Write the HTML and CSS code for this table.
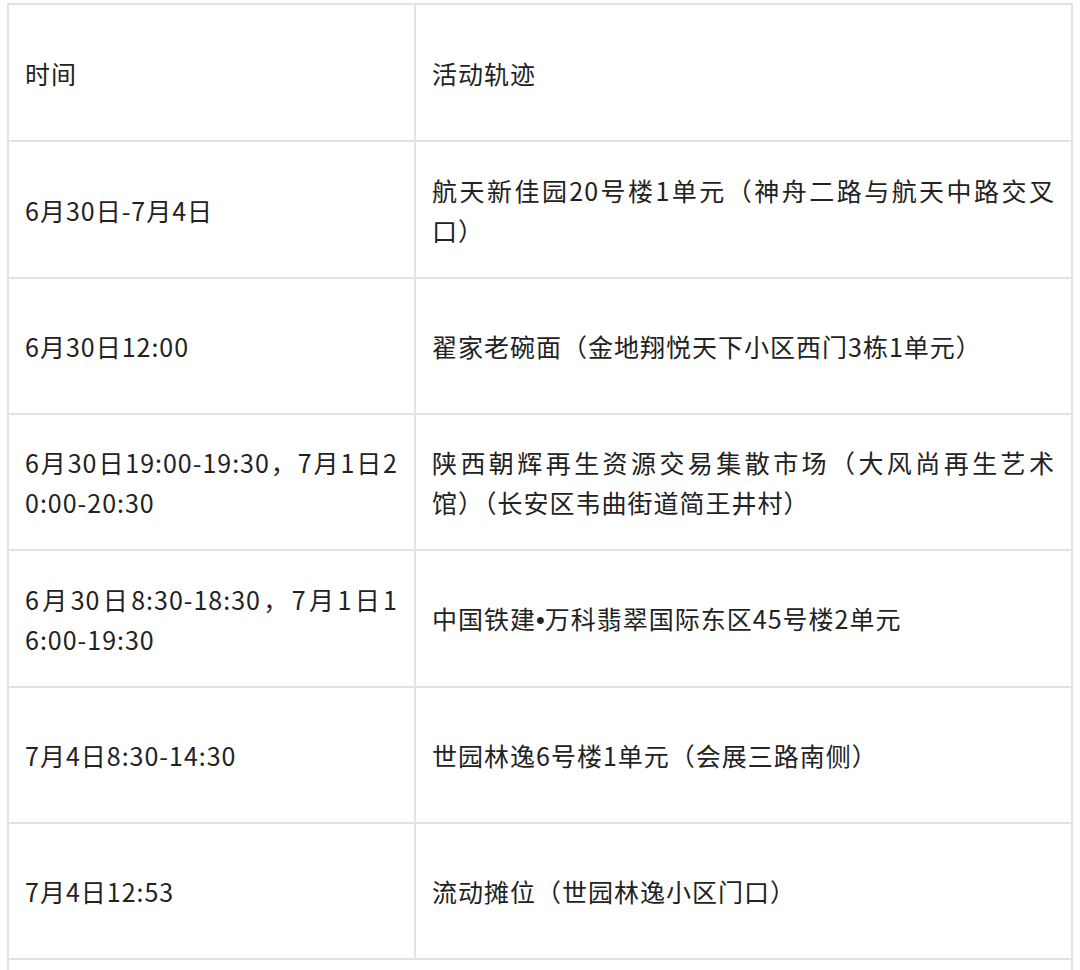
FILE: index.html
```html
<!DOCTYPE html>
<html lang="zh-CN">
<head>
<meta charset="utf-8">
<title>活动轨迹</title>
<link rel="stylesheet" href="styles.css">
</head>
<body>
<table class="track">
  <colgroup>
    <col class="c-time">
    <col class="c-place">
  </colgroup>
  <tbody>
    <tr class="r1">
      <td>时间</td>
      <td>活动轨迹</td>
    </tr>
    <tr class="r2">
      <td>6月30日-7月4日</td>
      <td><span class="l">航天新佳园20号楼1单元（神舟二路与航天中路交叉</span>口）</td>
    </tr>
    <tr class="r3">
      <td>6月30日12:00</td>
      <td>翟家老碗面（金地翔悦天下小区西门3栋1单元）</td>
    </tr>
    <tr class="r4">
      <td><span class="l">6月30日19:00-19:30，7月1日2</span>0:00-20:30</td>
      <td><span class="l">陕西朝辉再生资源交易集散市场（大风尚再生艺术</span>馆）（长安区韦曲街道简王井村）</td>
    </tr>
    <tr class="r5">
      <td><span class="l">6月30日8:30-18:30，7月1日1</span>6:00-19:30</td>
      <td>中国铁建<span class="dot">•</span>万科翡翠国际东区45号楼2单元</td>
    </tr>
    <tr class="r6">
      <td>7月4日8:30-14:30</td>
      <td>世园林逸6号楼1单元（会展三路南侧）</td>
    </tr>
    <tr class="r7">
      <td>7月4日12:53</td>
      <td>流动摊位（世园林逸小区门口）</td>
    </tr>
    <tr class="r8">
      <td colspan="2"></td>
    </tr>
  </tbody>
</table>
</body>
</html>
```

FILE: styles.css
```css
html, body {
  margin: 0;
  padding: 0;
  background: #ffffff;
  overflow: hidden;
}

.track {
  border-collapse: collapse;
  table-layout: fixed;
  width: 1066px;
  margin: 3px 0 0 7px;
}

.c-time {
  width: 407px;
}

.track td {
  border: 2px solid #e2e2e2;
  padding: 0 16px;
  height: 134px;
  vertical-align: middle;
  font-family: "Noto Sans CJK SC", "Noto Sans", sans-serif;
  font-size: 25px;
  line-height: 40px;
  letter-spacing: 1px;
  color: #222222;
  text-align: justify;
  word-break: break-all;
}

.track .r1 td,
.track .r2 td,
.track .r5 td {
  height: 135px;
}

.track .r8 td {
  height: 20px;
}

.l {
  display: block;
  text-align: justify;
  text-align-last: justify;
}

.dot {
  font-family: "Liberation Sans", sans-serif;
  letter-spacing: 0;
}
```
